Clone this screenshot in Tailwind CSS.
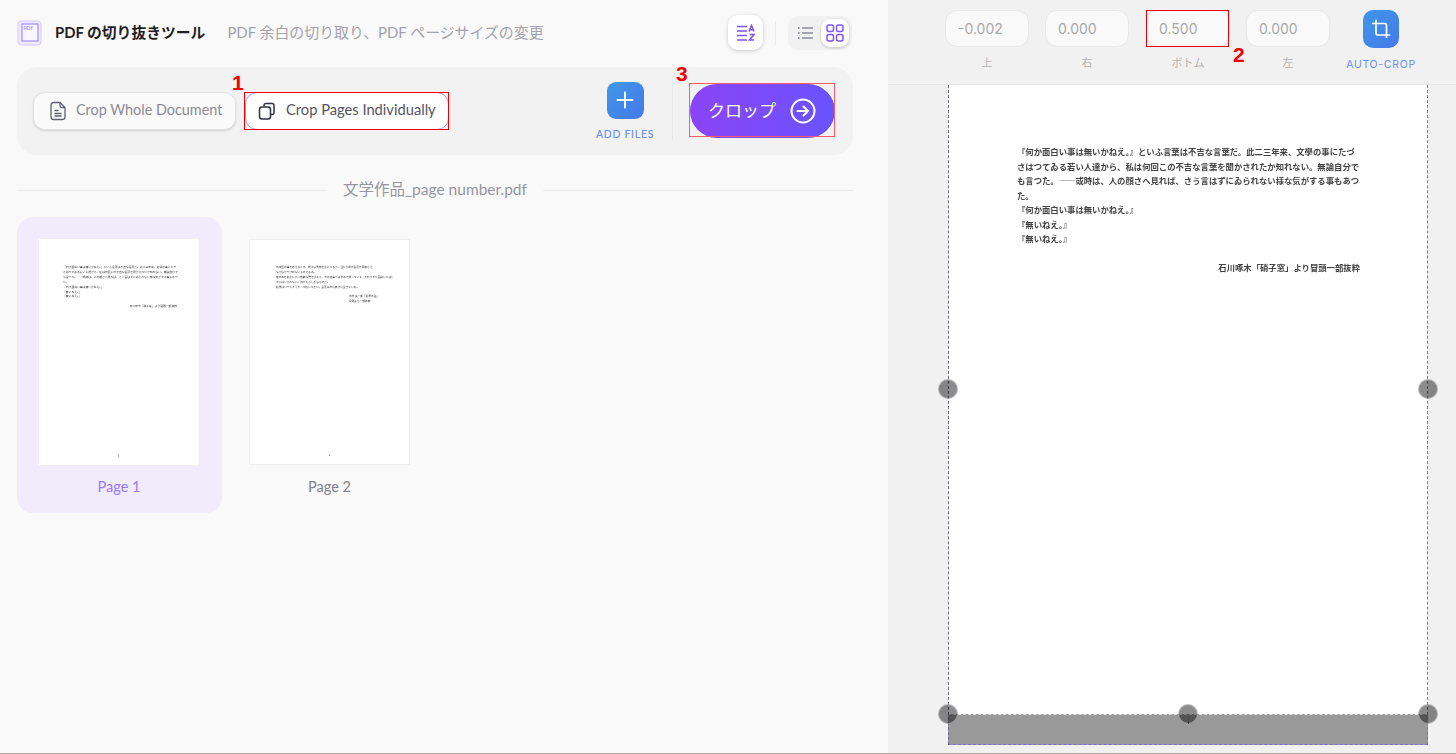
<!DOCTYPE html>
<html lang="ja">
  <head>
    <meta charset="UTF-8" />
    <meta name="viewport" content="width=device-width, initial-scale=1.0" />
    <script src="https://cdn.jsdelivr.net/npm/@tailwindcss/browser@4"></script>
    <title>PDF の切り抜きツール</title>
  </head>
  <body class="font-['Lato','Noto_Sans_CJK_JP',sans-serif] overflow-hidden">
    <div class="relative flex h-[754px] w-[1456px] border-b border-[#b3a8a0] overflow-hidden">
      <!-- left panel -->
      <div class="w-[888px] shrink-0 bg-[#f9f9f9] pl-[17px] pr-[35px]">
        <div class="flex items-center h-[67px] pb-[2px]">
          <svg width="26" height="26" viewBox="0 0 26 26" class="shrink-0" fill="none">
            <rect x="1" y="1" width="23" height="24" rx="3" fill="#efeaff" stroke="#d6ccff" />
            <rect x="5" y="4" width="16" height="17" fill="#f8f6ff" stroke="#8f7bf5" />
            <text x="6.5" y="9.5" font-size="5" font-weight="700" fill="#a896f7" font-family="Lato">PDF</text>
          </svg>
          <div class="ml-[12px] text-[14.800px] font-bold text-[#1f1f24] whitespace-nowrap">PDF の切り抜きツール</div>
          <div class="ml-[22px] text-[14.900px] text-[#a3a3ab] whitespace-nowrap">PDF 余白の切り取り、PDF ページサイズの変更</div>
          <div class="ml-auto mr-[1px] flex items-center">
            <button class="w-[35px] h-[35px] rounded-[10px] bg-white shadow-[0_1px_4px_rgba(0,0,0,0.18)] flex items-center justify-center">
              <svg width="20" height="18" viewBox="0 0 20 18" fill="none" stroke="#7c55f5" stroke-width="1.5">
                <path d="M1 2.5h10M1 7h10M1 11.500h10M1 16h10" />
                <path d="M13 7.500l2.500-6 2.500 6M14 5.800h3M13.500 10.500h4.500l-4.500 5.500h4.500" stroke-width="1.600" />
              </svg>
            </button>
            <div class="w-px h-[24px] bg-[#ececec] mx-[12px]"></div>
            <div class="flex items-center justify-between w-[64px] h-[34px] rounded-[10px] bg-[#f1f1f1] pl-[9px] pr-[3px]">
              <svg width="17" height="14" viewBox="0 0 17 14" fill="none" stroke="#8d8d99" stroke-width="1.600">
                <path d="M5 2h11M5 7h11M5 12h11" />
                <path d="M1 2h1.500M1 7h1.500M1 12h1.500" stroke-width="2" />
              </svg>
              <div class="w-[28px] h-[28px] rounded-[9px] bg-white shadow-[0_1px_3px_rgba(0,0,0,0.18)] flex items-center justify-center">
                <svg width="18" height="18" viewBox="0 0 18 18" fill="none" stroke="#7c55f5" stroke-width="1.500">
                  <rect x="1" y="1" width="6.500" height="6.500" rx="2" />
                  <rect x="10.500" y="1" width="6.500" height="6.500" rx="2" />
                  <rect x="1" y="10.500" width="6.500" height="6.500" rx="2" />
                  <rect x="10.500" y="10.500" width="6.500" height="6.500" rx="2" />
                </svg>
              </div>
            </div>
          </div>
        </div>

        <!-- toolbar -->
        <div class="flex items-center h-[88px] rounded-[20px] bg-[#f2f2f2] pl-[16px] pr-[18px]">
          <button class="flex items-center w-[203px] h-[38px] rounded-[12px] bg-[#fafafa] border border-[#e4e4e4] shadow-[0_1px_2px_rgba(0,0,0,0.15)] pl-[15px] pb-[2px] text-[14.400px] text-[#8b8b96] whitespace-nowrap">
            <svg width="18" height="20" viewBox="0 0 18 20" fill="none" stroke="#5f6270" stroke-width="1.300" class="mr-[9px] mt-[2px]">
              <path d="M2 4a2.500 2.500 0 0 1 2.500-2.500H11L16 6.500V16a2.500 2.500 0 0 1-2.500 2.500h-9A2.500 2.500 0 0 1 2 16z" />
              <path d="M11 1.500V5a1.500 1.500 0 0 0 1.500 1.500H16M5.500 9.500h4M5.500 12.500h7M5.500 15h7" />
            </svg>
            Crop Whole Document
          </button>
          <button class="ml-[9px] flex items-center w-[204px] h-[38px] rounded-[12px] bg-white border border-[#a89cf5] pl-[12px] pb-[3px] text-[14.700px] text-[#55555f] whitespace-nowrap">
            <svg width="18" height="18" viewBox="0 0 18 18" fill="none" stroke="#2f3340" stroke-width="1.500" class="mr-[10px] mt-[3px]">
              <path d="M6 4.500V3.500A2 2 0 0 1 8 1.500h6A2 2 0 0 1 16 3.500v7a2 2 0 0 1-2 2h-1.500" />
              <rect x="1.500" y="5" width="11" height="12" rx="2.500" />
            </svg>
            Crop Pages Individually
          </button>
          <div class="ml-auto flex flex-col items-center w-[58px] pt-[2px]">
            <button class="w-[37px] h-[37px] rounded-[9px] bg-gradient-to-br from-[#3f97e8] to-[#4479e9] flex items-center justify-center">
              <svg width="18" height="18" viewBox="0 0 18 18" fill="none" stroke="#fff" stroke-width="2" stroke-linecap="round">
                <path d="M9 1.500v15M1.500 9h15" />
              </svg>
            </button>
            <div class="mt-[8px] text-[10.500px] tracking-[0.7px] text-[#6d8fe8] font-medium whitespace-nowrap">ADD FILES</div>
          </div>
          <div class="w-px h-[58px] bg-[#e9e9e9] ml-[18px] mr-[17px]"></div>
          <button class="flex items-center w-[145px] h-[54px] rounded-full bg-gradient-to-r from-[#8a44f5] to-[#6a52ff] pl-[18px] text-[17px] text-white">
            クロップ
            <svg width="26" height="26" viewBox="0 0 26 26" fill="none" stroke="#fff" stroke-width="2" class="ml-[14px]" stroke-linecap="round" stroke-linejoin="round">
              <circle cx="13" cy="13" r="11.500" />
              <path d="M7.500 13h10.500M13.500 8.500L18 13l-4.500 4.500" />
            </svg>
          </button>
        </div>

        <!-- file name -->
        <div class="flex items-center mt-[25px] h-[20px]">
          <div class="flex-1 h-px bg-[#ececec]"></div>
          <div class="px-[16px] text-[15.500px] text-[#9696a1] whitespace-nowrap">文学作品_page number.pdf</div>
          <div class="flex-1 h-px bg-[#ececec]"></div>
        </div>

        <!-- pages -->
        <div class="flex mt-[17px] font-['Noto_Sans_CJK_JP',sans-serif]">
          <div class="w-[205px] h-[296px] rounded-[16px] bg-[#f0ecfc] pt-[22px] pl-[22px]">
            <div class="relative w-[160px] h-[226px] bg-white pl-[24px] pt-[26px] text-[2.800px] leading-[4.900px] text-[#333] whitespace-nowrap blur-[0.3px]">
              <div>『何か面白い事は無いかねえ。』といふ言葉は不吉な言葉だ。此二三年来、文學の事にたづ</div>
              <div>さはつてゐる若い人達から、私は何回この不吉な言葉を聞かされたか知れない。無論自分で</div>
              <div>も言つた。――或時は、人の顔さへ見れば、さう言はずにゐられない様な気がする事もあつ</div>
              <div>た。</div>
              <div>『何か面白い事は無いかねえ。』</div>
              <div>『無いねえ。』</div>
              <div>『無いねえ。』</div>
              <div class="mt-[5px] text-right w-[114px]">石川啄木「硝子窓」より冒頭一部抜粋</div>
              <div class="absolute left-[79px] bottom-[6px]">1</div>
            </div>
            <div class="w-[160px] mt-[11px] text-center text-[14.500px] text-[#9a78fc] font-['Lato',sans-serif]">Page 1</div>
          </div>
          <div class="ml-[27px] pt-[22px]">
            <div class="relative w-[161px] h-[226px] bg-white border border-[#eeeeee] pl-[26px] pt-[25px] text-[2.700px] leading-[4.900px] text-[#333] whitespace-nowrap blur-[0.3px]">
              <div>日本語の事を考えるとき、様々な書物を手にとるが、当たり前の言葉の意味さえ</div>
              <div>なかなかつかめないものである。</div>
              <div>昔の本を読むたびに新鮮な驚きがあり、今の文章とはまるで違っていて、それがまた面白いと感じ</div>
              <div>ずにはいられない。何ともふしぎなものだ。</div>
              <div>読書はいつもそうやって続いてきた。言葉は今も静かに生きている。</div>
              <div class="mt-[4.500px] pl-[73px]">中村 真一郎「読書の話」</div>
              <div class="pl-[73px]">冒頭より一部抜粋</div>
              <div class="absolute left-[79px] bottom-[6px]">2</div>
            </div>
            <div class="w-[161px] mt-[11px] text-center text-[14.500px] text-[#80808f] font-['Lato',sans-serif]">Page 2</div>
          </div>
        </div>
      </div>

      <!-- right panel -->
      <div class="flex-1 bg-[#f1f1f1] flex flex-col">
        <div class="h-[85px] shrink-0 border-b border-[#e6e6e6] pl-[57px] pt-[10px] flex font-['Inter','Noto_Sans_CJK_JP',sans-serif]">
          <div class="w-[84px] text-center">
            <div class="h-[37px] rounded-[12px] bg-[#f9f9f9] border border-[#e8e8e8] pl-[12px] text-left text-[14px] leading-[35px] text-[#a9a9a9]">-0.002</div>
            <div class="mt-[8px] text-[11px] text-[#b5b5b5]">上</div>
          </div>
          <div class="w-[84px] ml-[16px] text-center">
            <div class="h-[37px] rounded-[12px] bg-[#f9f9f9] border border-[#e8e8e8] pl-[12px] text-left text-[14px] leading-[35px] text-[#a9a9a9]">0.000</div>
            <div class="mt-[8px] text-[11px] text-[#b5b5b5]">右</div>
          </div>
          <div class="w-[84px] ml-[17px] text-center">
            <div class="h-[37px] rounded-[12px] bg-[#f9f9f9] border border-[#e8e8e8] pl-[12px] text-left text-[14px] leading-[35px] text-[#a9a9a9]">0.500</div>
            <div class="mt-[8px] text-[11px] text-[#b5b5b5]">ボトム</div>
          </div>
          <div class="w-[84px] ml-[16px] text-center">
            <div class="h-[37px] rounded-[12px] bg-[#f9f9f9] border border-[#e8e8e8] pl-[12px] text-left text-[14px] leading-[35px] text-[#a9a9a9]">0.000</div>
            <div class="mt-[8px] text-[11px] text-[#b5b5b5]">左</div>
          </div>
          <div class="ml-[16px] w-[70px] flex flex-col items-center">
            <div class="w-[36px] h-[38px] rounded-[10px] bg-gradient-to-br from-[#3f97e8] to-[#4479e9] flex items-center justify-center">
              <svg width="20" height="20" viewBox="0 0 20 20" fill="none" stroke="#fff" stroke-width="1.700">
                <path d="M1 4.500h12.500a2 2 0 0 1 2 2V19M5 .8V14a2 2 0 0 0 2 2h12.300" />
              </svg>
            </div>
            <div class="mt-[9px] text-[10.500px] tracking-[0.7px] text-[#6d8fe8] whitespace-nowrap">AUTO-CROP</div>
          </div>
        </div>

        <div class="pl-[60px]">
          <div class="relative w-[480px] h-[660px] bg-white">
            <div class="pl-[69px] pt-[59px] font-['Noto_Sans_CJK_JP',sans-serif] text-[8.350px] font-bold leading-[14.500px] text-[#444] whitespace-nowrap blur-[0.6px]">
              <div>『何か面白い事は無いかねえ。』といふ言葉は不吉な言葉だ。此二三年来、文學の事にたづ</div>
              <div>さはつてゐる若い人達から、私は何回この不吉な言葉を聞かされたか知れない。無論自分で</div>
              <div>も言つた。――或時は、人の顔さへ見れば、さう言はずにゐられない様な気がする事もあつ</div>
              <div>た。</div>
              <div>『何か面白い事は無いかねえ。』</div>
              <div>『無いねえ。』</div>
              <div>『無いねえ。』</div>
              <div class="mt-[14px] w-[343px] text-right">石川啄木「硝子窓」より冒頭一部抜粋</div>
            </div>

            <!-- crop overlay -->
            <div class="absolute left-0 right-0 bottom-0 h-[31px] bg-[#999999] border-t border-b border-dashed border-t-[#e2e2e2] border-b-[#7a6fd8]"></div>
            <div class="absolute inset-y-0 left-0 border-l border-dashed border-[#6b6b80]"></div>
            <div class="absolute inset-y-0 right-0 border-r border-dashed border-[#7a6fd8]"></div>
            <div class="absolute left-[-10px] top-[294px] w-[20px] h-[20px] rounded-full bg-black/45 border border-white/40"></div>
            <div class="absolute right-[-10px] top-[294px] w-[20px] h-[20px] rounded-full bg-black/45 border border-white/40"></div>
            <div class="absolute left-[-10px] top-[619px] w-[20px] h-[20px] rounded-full bg-black/45 border border-white/40"></div>
            <div class="absolute left-[230px] top-[619px] w-[20px] h-[20px] rounded-full bg-black/45 border border-white/40"></div>
            <div class="absolute right-[-10px] top-[619px] w-[20px] h-[20px] rounded-full bg-black/45 border border-white/40"></div>
            <div class="absolute left-[240px] top-[633px] w-px h-[6px] bg-[#444]"></div>
          </div>
        </div>
      </div>

      <!-- red annotations -->
      <div class="absolute left-[244px] top-[92px] w-[205px] h-[38px] border border-[#f00000]"></div>
      <div class="absolute left-[1146px] top-[10px] w-[83px] h-[37px] border border-[#f00000]"></div>
      <div class="absolute left-[689px] top-[83px] w-[146px] h-[54px] border border-[#ff5a6e]"></div>
      <div class="absolute left-[232px] top-[67px] text-[21px] font-bold text-[#f00000] font-['Liberation_Sans',sans-serif]">1</div>
      <div class="absolute left-[1233px] top-[39px] text-[21px] font-bold text-[#f00000] font-['Liberation_Sans',sans-serif]">2</div>
      <div class="absolute left-[676px] top-[58px] text-[21px] font-bold text-[#f00000] font-['Liberation_Sans',sans-serif]">3</div>
    </div>
  </body>
</html>
